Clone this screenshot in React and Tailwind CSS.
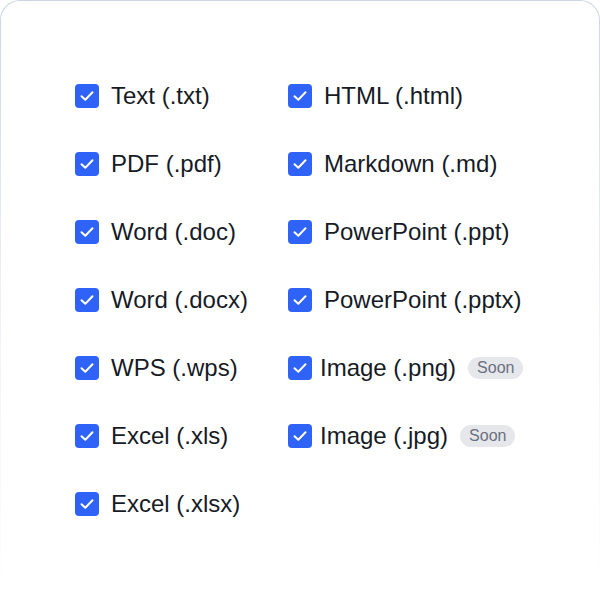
import React from 'react';

const left = [
  { label: 'Text (.txt)' },
  { label: 'PDF (.pdf)' },
  { label: 'Word (.doc)' },
  { label: 'Word (.docx)' },
  { label: 'WPS (.wps)' },
  { label: 'Excel (.xls)' },
  { label: 'Excel (.xlsx)' },
];

const right = [
  { label: 'HTML (.html)' },
  { label: 'Markdown (.md)' },
  { label: 'PowerPoint (.ppt)' },
  { label: 'PowerPoint (.pptx)' },
  { label: 'Image (.png)', soon: true },
  { label: 'Image (.jpg)', soon: true },
];

const Check = () => (
  <span className="w-6 h-6 rounded-[4px] bg-[#2f62f6] flex items-center justify-center shrink-0">
    <svg width="24" height="24" viewBox="0 0 24 24" fill="none">
      <path d="M6.5 12.2 L10.3 15.8 L17.5 8.3" stroke="white" strokeWidth="2" strokeLinecap="round" strokeLinejoin="round" />
    </svg>
  </span>
);

const Item = ({ label, soon }) => (
  <label className={`flex items-center h-6 ${soon ? 'gap-2' : 'gap-3'}`}>
    <Check />
    <span className="text-[24px] leading-6 text-[#161b26] whitespace-nowrap">{label}</span>
    {soon && (
      <span className="ml-1 px-[9px] h-[22px] flex items-center rounded-full bg-[#e6e7eb] text-[16px] text-[#6b7080]">
        Soon
      </span>
    )}
  </label>
);

const App = () => {
  return (
    <div className="w-[600px] h-[600px] bg-white" style={{ fontFamily: '"Liberation Sans", Arial, sans-serif' }}>
      {/* fading border card */}
      <div className="h-full rounded-t-[20px] p-px bg-gradient-to-b from-[#cdd6e2] via-[#eef1f5] to-white">
        <div className="h-full rounded-t-[19px] bg-white pl-[74px] pt-[83px]">
          <div className="flex">
            <div className="w-[213px] flex flex-col gap-[44px]">
              {left.map((it) => (
                <Item key={it.label} {...it} />
              ))}
            </div>
            <div className="flex flex-col gap-[44px]">
              {right.map((it) => (
                <Item key={it.label} {...it} />
              ))}
            </div>
          </div>
        </div>
      </div>
    </div>
  );
};

export default App;
